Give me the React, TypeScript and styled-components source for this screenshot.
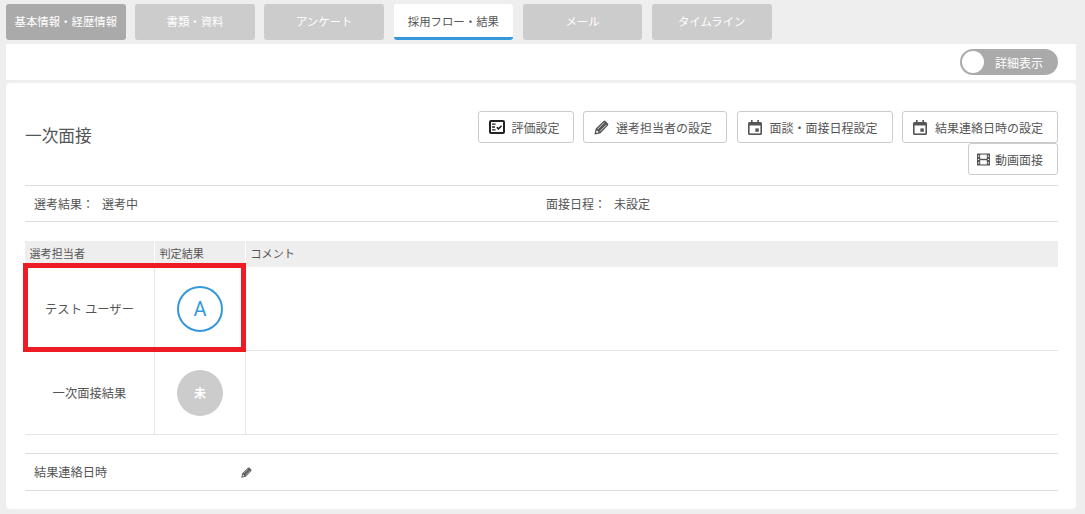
import styled, { createGlobalStyle } from "styled-components";

const GlobalStyle = createGlobalStyle`
    html, body {
        margin: 0;
        padding: 0;
        background: #eeeeee;
    }

    body {
        font-family: "Roboto", "Noto Sans CJK JP", sans-serif;
        font-size: 12px;
        color: #555555;
    }
`;

const Page = styled.div`
    width: 1085px;
    height: 514px;
    padding: 4px 9px 5px 6px;
    box-sizing: border-box;
    overflow: hidden;
`;

const Tabs = styled.div`
    display: flex;
    gap: 9.6px;
    height: 36px;
`;

const Tab = styled.div<{ $state?: "done" | "active" }>`
    display: flex;
    align-items: center;
    justify-content: center;
    width: 119.6px;
    box-sizing: border-box;
    border-radius: 3px;
    font-size: 11.4px;
    padding-bottom: 3px;
    color: ${(props) => (props.$state === "active" ? "#555555" : "#ffffff")};
    background: ${(props) =>
        props.$state === "done" ? "#aaaaaa" : props.$state === "active" ? "#ffffff" : "#cccccc"};
    border-bottom: ${(props) => (props.$state === "active" ? "3px solid #3498db" : "none")};
    padding-top: ${(props) => (props.$state === "active" ? "3px" : "0")};
`;

const ToggleBar = styled.div`
    display: flex;
    justify-content: flex-end;
    align-items: center;
    height: 36px;
    margin-top: 4px;
    padding-right: 18px;
    background: #ffffff;
`;

const Toggle = styled.div`
    display: flex;
    align-items: center;
    width: 98px;
    height: 26px;
    box-sizing: border-box;
    border-radius: 13px;
    background: #aaaaaa;
    color: #ffffff;
    padding: 2px;
`;

const Knob = styled.span`
    width: 22px;
    height: 22px;
    border-radius: 50%;
    background: #ffffff;
    margin-right: 11px;
`;

const Card = styled.div`
    height: 426px;
    box-sizing: border-box;
    margin-top: 3px;
    padding: 28px 18px 0 19px;
    background: #ffffff;
    border-radius: 4px;
`;

const Head = styled.div`
    display: flex;
    justify-content: space-between;
    height: 74px;
    border-bottom: 1px solid #dddddd;
`;

const Title = styled.h2`
    margin: 14px 0 0;
    font-size: 16.7px;
    font-weight: 400;
    line-height: 24px;
`;

const Actions = styled.div`
    display: flex;
    flex-wrap: wrap;
    justify-content: flex-end;
    align-content: flex-start;
    column-gap: 9.5px;
    width: 600px;
`;

const ActionButton = styled.button<{ $width: number; $pad: number; $gap: number }>`
    display: flex;
    align-items: center;
    gap: ${(props) => props.$gap}px;
    height: 32px;
    width: ${(props) => props.$width}px;
    box-sizing: border-box;
    padding: 0 0 0 ${(props) => props.$pad}px;
    border: 1px solid #cccccc;
    border-radius: 3px;
    background: #ffffff;
    color: #555555;
    font: inherit;
    font-size: 12px;

    svg {
        flex: none;
    }
`;

const InfoRow = styled.div`
    display: flex;
    align-items: center;
    height: 35px;
    padding-left: 9px;
    border-bottom: 1px solid #dddddd;
`;

const InfoItem = styled.div<{ $width: number }>`
    width: ${(props) => props.$width}px;
    display: flex;
    gap: 8px;
`;

const TableGrid = styled.div`
    position: relative;
    display: grid;
    grid-template-columns: 130px 91px 1fr;
    margin-top: 19px;
`;

const HeadCell = styled.div`
    display: flex;
    align-items: center;
    height: 26px;
    padding: 0 0 2px 4.5px;
    box-sizing: border-box;
    background: #eeeeee;
    border-right: 1px solid #ffffff;
    font-size: 11.1px;

    &:nth-child(3) {
        border-right: none;
    }
`;

const BodyCell = styled.div<{ $last?: boolean }>`
    display: flex;
    align-items: center;
    justify-content: center;
    height: 84px;
    box-sizing: border-box;
    font-size: 12.3px;
    border-bottom: 1px solid #e6e6e6;
    border-right: ${(props) => (props.$last ? "none" : "1px solid #e6e6e6")};
`;

const Grade = styled.div<{ $empty?: boolean }>`
    display: flex;
    align-items: center;
    justify-content: center;
    width: 46px;
    height: 46px;
    box-sizing: border-box;
    border-radius: 50%;
    border: ${(props) => (props.$empty ? "none" : "2px solid #3498db")};
    background: ${(props) => (props.$empty ? "#cccccc" : "#ffffff")};
    color: ${(props) => (props.$empty ? "#ffffff" : "#3498db")};
    font-size: ${(props) => (props.$empty ? "12px" : "20px")};
    font-weight: ${(props) => (props.$empty ? 700 : 400)};
`;

const Highlight = styled.div`
    position: absolute;
    left: -2px;
    top: 22px;
    width: 223px;
    height: 89px;
    box-sizing: border-box;
    border: 5px solid #ed1c24;
`;

const ResultRow = styled.div`
    display: flex;
    align-items: center;
    height: 38px;
    box-sizing: border-box;
    margin-top: 18px;
    padding-left: 9px;
    border-top: 1px solid #dddddd;
    border-bottom: 1px solid #dddddd;
`;

const ResultLabel = styled.div`
    width: 207px;
    margin-top: -1px;
    font-size: 12.2px;
`;

const EvalIcon = () => (
    <svg width="16" height="14" viewBox="0 0 16 14">
        <rect x="1" y="1" width="14" height="12" rx="1" fill="none" stroke="#222222" strokeWidth="2" />
        <path d="M3 4.2h3.6M3 7h3M3 9.8h3.6" stroke="#222222" strokeWidth="1.3" />
        <path d="M7.8 7.2l1.7 1.7 3.1-3.2" fill="none" stroke="#222222" strokeWidth="1.6" />
    </svg>
);

const CalendarIcon = () => (
    <svg width="14" height="15" viewBox="0 0 14 15">
        <path
            d="M3 0h1.6v2h4.8V0H11v2h1.5A1.5 1.5 0 0 1 14 3.5v10a1.5 1.5 0 0 1-1.5 1.5h-11A1.5 1.5 0 0 1 0 13.5v-10A1.5 1.5 0 0 1 1.5 2H3z"
            fill="#555555"
        />
        <rect x="1.6" y="5.5" width="10.8" height="7.9" fill="#ffffff" />
        <rect x="7.4" y="8.4" width="3.4" height="3.4" fill="#555555" />
    </svg>
);

const StripedPencil = ({ size }: { size: number }) => (
    <svg width={size} height={size} viewBox="0 0 14 14">
        <path
            d="M.4 13.6l1.1-5.4L8.9 1a1.3 1.3 0 0 1 1.8 0l2.3 2.3a1.3 1.3 0 0 1 0 1.8L5.8 12.5z"
            fill="#555555"
        />
        <path d="M3.5 8.4l6-6M5.6 10.5l6-6" stroke="#ffffff" strokeWidth="0.7" />
        <path d="M1.9 12.1l.6-2.6 2 2z" fill="#ffffff" />
    </svg>
);

const FilmIcon = () => (
    <svg width="13" height="13" viewBox="0 0 13 13">
        <rect x="0" y="0.5" width="13" height="12" fill="#555555" />
        <rect x="3.2" y="1.6" width="6.6" height="4.2" fill="#ffffff" />
        <rect x="3.2" y="7.2" width="6.6" height="4.2" fill="#ffffff" />
        <path
            d="M1 2.5h1.2v1.2H1zM1 5.9h1.2v1.2H1zM1 9.3h1.2v1.2H1zM10.8 2.5H12v1.2h-1.2zM10.8 5.9H12v1.2h-1.2zM10.8 9.3H12v1.2h-1.2z"
            fill="#ffffff"
        />
    </svg>
);

const App = () => {
    return (
        <Page>
            <GlobalStyle />
            <Tabs>
                <Tab $state="done">基本情報・経歴情報</Tab>
                <Tab>書類・資料</Tab>
                <Tab>アンケート</Tab>
                <Tab $state="active">採用フロー・結果</Tab>
                <Tab>メール</Tab>
                <Tab>タイムライン</Tab>
            </Tabs>
            <ToggleBar>
                <Toggle>
                    <Knob />
                    詳細表示
                </Toggle>
            </ToggleBar>
            <Card>
                <Head>
                    <Title>一次面接</Title>
                    <Actions>
                        <ActionButton $width={96} $pad={10} $gap={7}>
                            <EvalIcon />
                            評価設定
                        </ActionButton>
                        <ActionButton $width={144} $pad={10} $gap={7}>
                            <StripedPencil size={15} />
                            選考担当者の設定
                        </ActionButton>
                        <ActionButton $width={156} $pad={10} $gap={8}>
                            <CalendarIcon />
                            面談・面接日程設定
                        </ActionButton>
                        <ActionButton $width={156} $pad={10} $gap={8}>
                            <CalendarIcon />
                            結果連絡日時の設定
                        </ActionButton>
                        <ActionButton $width={90} $pad={8} $gap={5}>
                            <FilmIcon />
                            動画面接
                        </ActionButton>
                    </Actions>
                </Head>
                <InfoRow>
                    <InfoItem $width={512}>
                        <span>選考結果：</span>
                        <span>選考中</span>
                    </InfoItem>
                    <InfoItem $width={300}>
                        <span>面接日程：</span>
                        <span>未設定</span>
                    </InfoItem>
                </InfoRow>
                <TableGrid>
                    <HeadCell>選考担当者</HeadCell>
                    <HeadCell>判定結果</HeadCell>
                    <HeadCell>コメント</HeadCell>
                    <BodyCell>テスト ユーザー</BodyCell>
                    <BodyCell>
                        <Grade>A</Grade>
                    </BodyCell>
                    <BodyCell $last />
                    <BodyCell>一次面接結果</BodyCell>
                    <BodyCell>
                        <Grade $empty>未</Grade>
                    </BodyCell>
                    <BodyCell $last />
                    <Highlight />
                </TableGrid>
                <ResultRow>
                    <ResultLabel>結果連絡日時</ResultLabel>
                    <StripedPencil size={11} />
                </ResultRow>
            </Card>
        </Page>
    );
};

export default App;
